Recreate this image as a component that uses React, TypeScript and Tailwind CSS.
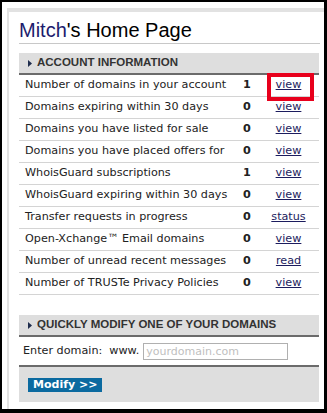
const rows: { label: string; count: number; link: string }[] = [
  { label: "Number of domains in your account", count: 1, link: "view" },
  { label: "Domains expiring within 30 days", count: 0, link: "view" },
  { label: "Domains you have listed for sale", count: 0, link: "view" },
  { label: "Domains you have placed offers for", count: 0, link: "view" },
  { label: "WhoisGuard subscriptions", count: 1, link: "view" },
  { label: "WhoisGuard expiring within 30 days", count: 0, link: "view" },
  { label: "Transfer requests in progress", count: 0, link: "status" },
  { label: "Open-Xchange™ Email domains", count: 0, link: "view" },
  { label: "Number of unread recent messages", count: 0, link: "read" },
  { label: "Number of TRUSTe Privacy Policies", count: 0, link: "view" },
];

function SectionHeader({ title }: { title: string }) {
  return (
    <div className="flex h-[22px] items-center gap-[5px] border-b-2 border-[#6b6b6b] bg-[#dedede] pl-[9px] font-['Liberation_Sans',Arial,sans-serif] text-[11.5px] font-bold text-[#333]">
      <svg width="4" height="7" viewBox="0 0 4 7">
        <path d="M0 0L4 3.5L0 7Z" fill="#1f2d4d" />
      </svg>
      <span>{title}</span>
    </div>
  );
}

export default function App() {
  return (
    <div className="h-[413px] w-[327px] bg-black pt-[2px] pr-[3px] pb-[4px] pl-[2px]">
      <div className="h-full w-full bg-white pt-[6px] pl-[5px]">
        <div className="h-full border-l-2 border-t-[4px] border-[#e2e2e2] pl-[10px] pr-[4px] font-['DejaVu_Sans',Verdana,sans-serif]">
          <div className="flex h-[32px] items-end border-b border-[#c8c8c8] pb-[3px] font-['Liberation_Sans',Arial,sans-serif] text-[20px] leading-none">
            <span className="text-[#1c1c6e]">Mitch</span>
            <span className="text-black">'s Home Page</span>
          </div>

          <div className="mt-[9px] w-[300px]">
            <SectionHeader title="ACCOUNT INFORMATION" />
            {rows.map((r, i) => (
              <div
                key={r.label}
                className="relative flex h-[22px] items-center border-b border-[#d4d4d4] text-[11.2px] text-[#222]"
              >
                <span className="w-[217px] pl-[6px]">{r.label}</span>
                <span className="w-[22px] text-center font-bold">{r.count}</span>
                <span className="flex-1 text-center">
                  <span className="text-[#1c1c5e] underline">{r.link}</span>
                </span>
                {i === 0 && (
                  <span className="absolute top-[-2px] left-[248px] h-[28px] w-[47px] border-[4px] border-[#e8001c]" />
                )}
              </div>
            ))}

            <div className="mt-[20px]">
              <SectionHeader title="QUICKLY MODIFY ONE OF YOUR DOMAINS" />
              <div className="flex h-[30px] items-center border-b-2 border-[#6b6b6b] pl-[4px] text-[11.2px] text-[#222]">
                <span>Enter domain:</span>
                <span className="ml-[7px]">www.</span>
                <input
                  className="ml-[4px] h-[17px] w-[145px] border border-[#b0b0b0] px-[2px] text-[11px] outline-none placeholder:text-[#c0c0c0]"
                  placeholder="yourdomain.com"
                />
              </div>
              <div className="flex h-[35px] items-center bg-[#dedede] pl-[9px]">
                <button className="h-[14px] bg-[#0b6aa0] px-[5px] text-[11px] leading-[14px] font-bold text-white">
                  Modify &gt;&gt;
                </button>
              </div>
            </div>
          </div>
        </div>
      </div>
    </div>
  );
}
